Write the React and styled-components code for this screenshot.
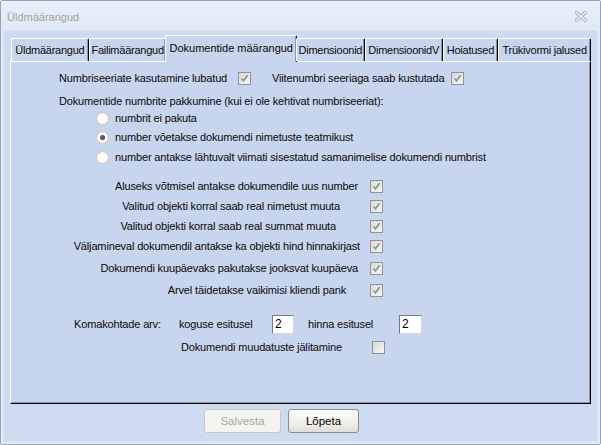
import React from "react";
import styled, { createGlobalStyle, css } from "styled-components";

const GlobalStyle = createGlobalStyle`
  html, body {
    margin: 0;
    padding: 0;
    background: #ffffff;
  }
  body {
    font-family: "Liberation Sans", Arial, sans-serif;
    font-size: 11px;
    color: #0a0a0a;
  }
`;

const StyledWindow = styled.div`
  width: 601px;
  height: 445px;
  box-sizing: border-box;
  border: 1px solid #97a3b6;
  border-radius: 2px;
  display: flex;
  flex-direction: column;
  background: #e3ebf7;
  overflow: hidden;
`;

const StyledTitleBar = styled.div`
  height: 29px;
  flex-shrink: 0;
  display: flex;
  align-items: center;
  justify-content: space-between;
  padding: 2px 13px 0 6px;
  box-sizing: border-box;
  background: linear-gradient(#e9f0f9, #dfe8f5);
  color: #a3a3a3;
  font-size: 11px;
`;

const StyledBody = styled.div`
  flex: 1;
  margin: 0 2px 2px;
  border: 1px solid #d9e3f3;
  display: flex;
  flex-direction: column;
  padding: 3px 6px 0 6px;
  background-color: #c9d7ef;
  background-image: radial-gradient(#d2def2 0.6px, transparent 0.8px);
  background-size: 2px 2px;
`;

const StyledTabStrip = styled.div`
  display: flex;
  align-items: flex-end;
  height: 27px;
  padding-left: 1px;
  position: relative;
  z-index: 2;
`;

const StyledTab = styled.div`
  height: 23px;
  box-sizing: border-box;
  padding: 0 1px;
  display: flex;
  align-items: center;
  justify-content: center;
  width: ${(p) => p.$w}px;
  background: #c7d5ee;
  border-top: 1px solid #ffffff;
  border-left: 1px solid #ffffff;
  border-right: 1px solid #000000;
  box-shadow: inset -1px 0 0 #8a96aa;
  border-radius: 2px 2px 0 0;
  white-space: nowrap;
  letter-spacing: -0.25px;

  ${(p) =>
    p.$active &&
    css`
      height: 27px;
      margin: 0 -1px -1px;
      width: ${p.$w + 2}px;
      padding-bottom: 3px;
      letter-spacing: 0;
    `}
`;

const StyledPanel = styled.div`
  height: 343px;
  box-sizing: border-box;
  background: #c7d5ee;
  border-top: 1px solid #ffffff;
  border-left: 1px solid #ffffff;
  border-right: 1px solid #000000;
  border-bottom: 1px solid #000000;
  box-shadow: inset -1px -1px 0 #8a96aa;
  padding-top: 8px;
  display: flex;
  flex-direction: column;
  letter-spacing: -0.15px;
`;

const StyledRow = styled.div`
  display: flex;
  align-items: center;
  height: ${(p) => p.$h || 16}px;
  margin-top: ${(p) => p.$mt || 0}px;
  margin-left: ${(p) => p.$ml || 0}px;
  white-space: nowrap;
`;

const StyledLabel = styled.span`
  display: inline-block;
  width: ${(p) => (p.$w ? `${p.$w}px` : "auto")};
  flex-shrink: 0;
  text-align: ${(p) => p.$align || "left"};
  padding-right: ${(p) => p.$pr || 0}px;
  box-sizing: border-box;
  margin-left: ${(p) => p.$ml || 0}px;
`;

const StyledCheck = styled.span`
  width: 13px;
  height: 13px;
  box-sizing: border-box;
  flex-shrink: 0;
  border: 1px solid #909498;
  background: linear-gradient(135deg, #d8d8d6, #f6f6f4);
  display: flex;
  align-items: center;
  justify-content: center;

  svg {
    display: block;
  }
`;

const StyledRadio = styled.span`
  width: 13px;
  height: 13px;
  box-sizing: border-box;
  flex-shrink: 0;
  border-radius: 50%;
  border: 1px solid #e3bfa4;
  background: radial-gradient(circle at 60% 60%, #ffffff 40%, #f4e6dc 100%);
  display: flex;
  align-items: center;
  justify-content: center;
  margin-right: 6px;

  &::after {
    content: "";
    display: ${(p) => (p.$checked ? "block" : "none")};
    width: 5px;
    height: 5px;
    border-radius: 50%;
    background: radial-gradient(circle at 40% 40%, #5a6fa8, #1f2e5e);
  }
`;

const StyledInput = styled.input`
  width: ${(p) => p.$w || 22}px;
  height: 19px;
  box-sizing: border-box;
  border: 1px solid #7a7a7a;
  border-right-color: #d4d4d4;
  border-bottom-color: #d4d4d4;
  background: #ffffff;
  font-family: "Liberation Sans", Arial, sans-serif;
  font-size: 12px;
  padding: 0 2px;
  margin: 0;
  outline: none;
  flex-shrink: 0;
`;

const StyledFooter = styled.div`
  display: flex;
  gap: 7px;
  padding: 5px 0 0 194px;
`;

const StyledButton = styled.button`
  width: ${(p) => p.$w}px;
  height: 24px;
  box-sizing: border-box;
  border-radius: 3px;
  font-family: "Liberation Sans", Arial, sans-serif;
  font-size: 11.5px;
  padding: 0;
  border: 1px solid ${(p) => (p.disabled ? "#cac8bb" : "#8c8c8c")};
  color: ${(p) => (p.disabled ? "#a7a7a7" : "#000")};
  background: ${(p) =>
    p.disabled ? "#f4f3ef" : "linear-gradient(#fdfdfc, #ecebe6 70%, #dedcd6)"};
`;

function CheckMark() {
  return (
    <StyledCheck>
      <svg width="9" height="9" viewBox="0 0 9 9">
        <path d="M1.5 4.5 L3.5 6.8 L7.6 1.2" fill="none" stroke="#8d8f91" strokeWidth="1.6" />
      </svg>
    </StyledCheck>
  );
}

function EmptyCheck() {
  return <StyledCheck />;
}

function CloseIcon() {
  return (
    <svg width="12" height="11" viewBox="0 0 12 11">
      <path d="M1.5 1.5 L10.5 9.5 M10.5 1.5 L1.5 9.5" stroke="#a8b4c6" strokeWidth="3.4" strokeLinecap="square" />
      <path d="M1.5 1.5 L10.5 9.5 M10.5 1.5 L1.5 9.5" stroke="#f2f5fa" strokeWidth="1.3" strokeLinecap="square" />
    </svg>
  );
}

const tabs = [
  { name: "Üldmäärangud", w: 78 },
  { name: "Failimäärangud", w: 78 },
  { name: "Dokumentide määrangud", w: 130, active: true },
  { name: "Dimensioonid", w: 69 },
  { name: "DimensioonidV", w: 78 },
  { name: "Hoiatused", w: 56 },
  { name: "Trükivormi jalused", w: 93 },
];

const checkRows = [
  { text: "Aluseks võtmisel antakse dokumendile uus number", pr: 12, mt: 13 },
  { text: "Valitud objekti korral saab real nimetust muuta", pr: 30, mt: 4 },
  { text: "Valitud objekti korral saab real summat muuta", pr: 34, mt: 4 },
  { text: "Väljamineval dokumendil antakse ka objekti hind hinnakirjast", pr: 10, mt: 4 },
  { text: "Dokumendi kuupäevaks pakutakse jooksvat kuupäeva", pr: 12, mt: 6 },
  { text: "Arvel täidetakse vaikimisi kliendi pank", pr: 24, mt: 6 },
];

export default function App() {
  return (
    <>
      <GlobalStyle />
      <StyledWindow>
        <StyledTitleBar>
          <span>Üldmäärangud</span>
          <CloseIcon />
        </StyledTitleBar>
        <StyledBody>
          <StyledTabStrip>
            {tabs.map((t) => (
              <StyledTab key={t.name} $w={t.w} $active={t.active}>
                {t.name}
              </StyledTab>
            ))}
          </StyledTabStrip>
          <StyledPanel>
            <StyledRow $ml={48}>
              <StyledLabel $w={179}>Numbriseeriate kasutamine lubatud</StyledLabel>
              <CheckMark />
              <StyledLabel $w={179} $ml={21}>Viitenumbri seeriaga saab kustutada</StyledLabel>
              <CheckMark />
            </StyledRow>
            <StyledRow $ml={48} $mt={7}>
              Dokumentide numbrite pakkumine (kui ei ole kehtivat numbriseeriat):
            </StyledRow>
            <StyledRow $ml={85} $mt={1}>
              <StyledRadio />
              numbrit ei pakuta
            </StyledRow>
            <StyledRow $ml={85} $mt={3}>
              <StyledRadio $checked />
              number võetakse dokumendi nimetuste teatmikust
            </StyledRow>
            <StyledRow $ml={85} $mt={4}>
              <StyledRadio />
              number antakse lähtuvalt viimati sisestatud samanimelise dokumendi numbrist
            </StyledRow>
            {checkRows.map((r) => (
              <StyledRow key={r.text} $mt={r.mt}>
                <StyledLabel $w={359} $align="right" $pr={r.pr}>
                  {r.text}
                </StyledLabel>
                <CheckMark />
              </StyledRow>
            ))}
            <StyledRow $ml={63} $mt={16} $h={20}>
              <StyledLabel $w={105}>Komakohtade arv:</StyledLabel>
              <StyledLabel $w={93}>koguse esitusel</StyledLabel>
              <StyledInput defaultValue="2" $w={22} />
              <StyledLabel $w={91} $ml={14}>hinna esitusel</StyledLabel>
              <StyledInput defaultValue="2" $w={23} />
            </StyledRow>
            <StyledRow $ml={170} $mt={5}>
              <StyledLabel $w={191}>Dokumendi muudatuste jälitamine</StyledLabel>
              <EmptyCheck />
            </StyledRow>
          </StyledPanel>
          <StyledFooter>
            <StyledButton $w={77} disabled>
              Salvesta
            </StyledButton>
            <StyledButton $w={71}>Lõpeta</StyledButton>
          </StyledFooter>
        </StyledBody>
      </StyledWindow>
    </>
  );
}
